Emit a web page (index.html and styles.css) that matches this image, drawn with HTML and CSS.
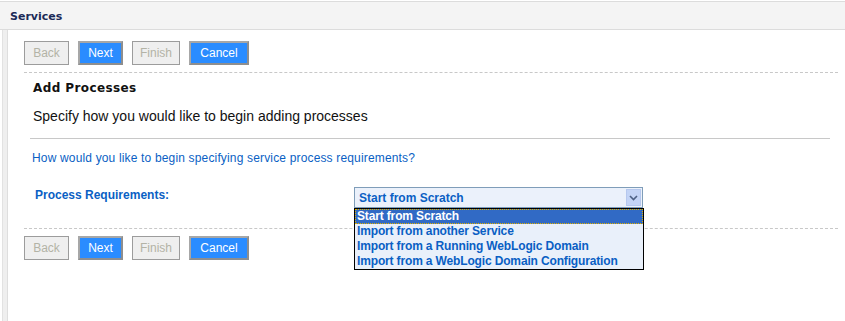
FILE: index.html
```html
<!DOCTYPE html>
<html>
<head>
<meta charset="utf-8">
<link rel="stylesheet" href="styles.css">
</head>
<body>
<div class="header">Services</div>
<div class="main">
  <div class="rail"></div>
  <div class="content">
    <div class="btnrow">
      <span class="btn disabled w45">Back</span>
      <span class="btn active w45">Next</span>
      <span class="btn disabled w48">Finish</span>
      <span class="btn active w60">Cancel</span>
    </div>
    <div class="dash"></div>
    <div class="section">
      <div class="title">Add Processes</div>
      <div class="desc">Specify how you would like to begin adding processes</div>
    </div>
    <div class="rule"></div>
    <div class="question">How would you like to begin specifying service process requirements?</div>
    <div class="field">
      <div class="label">Process Requirements:</div>
      <div class="selectwrap">
        <div class="select">
          <span class="seltext">Start from Scratch</span>
          <span class="arrow"><svg width="9" height="6" viewBox="0 0 9 6"><path d="M1 1 L4.5 4.5 L8 1" fill="none" stroke="#4d6185" stroke-width="1.6"/></svg></span>
        </div>
        <ul class="list">
          <li class="sel">Start from Scratch</li>
          <li>Import from another Service</li>
          <li>Import from a Running WebLogic Domain</li>
          <li>Import from a WebLogic Domain Configuration</li>
        </ul>
      </div>
    </div>
    <div class="dash dash2"></div>
    <div class="btnrow btnrow2">
      <span class="btn disabled w45">Back</span>
      <span class="btn active w45">Next</span>
      <span class="btn disabled w48">Finish</span>
      <span class="btn active w60">Cancel</span>
    </div>
  </div>
</div>
</body>
</html>
```
FILE: styles.css
```css
html, body {
  margin: 0;
  padding: 0;
  background: #ffffff;
  font-family: "Liberation Sans", Arial, sans-serif;
}
.header {
  margin-top: 1px;
  height: 27px;
  line-height: 29px;
  border-top: 1px solid #dcdcdc;
  border-bottom: 1px solid #dcdcdc;
  background: #f4f4f4;
  padding-left: 10px;
  font-family: "DejaVu Sans", sans-serif;
  font-weight: bold;
  font-size: 11px;
  color: #1b2a57;
}
.main {
  display: flex;
  height: 291px;
}
.rail {
  width: 4px;
  margin-left: 2px;
  background: #efefef;
  border-left: 1px solid #e2e2e2;
  border-right: 1px solid #dedede;
}
.content {
  flex: 1;
  padding-left: 16px;
  padding-right: 7px;
}
.btnrow {
  display: flex;
  gap: 9px;
  margin-top: 11px;
  height: 24px;
}
.btn {
  box-sizing: border-box;
  height: 24px;
  display: flex;
  align-items: center;
  justify-content: center;
  font-size: 12px;
  font-family: "Liberation Sans", Arial, sans-serif;
}
.w45 { width: 45px; }
.w48 { width: 48px; }
.w60 { width: 60px; }
.btn.disabled {
  border: 1px solid #9c9c9c;
  background: #efefef;
  color: #b3b3a6;
}
.btn.active {
  border: 2px solid #a7a7a7;
  border-right-color: #8e8e8e;
  border-bottom-color: #8e8e8e;
  background: #2a8cff;
  color: #ffffff;
}
.dash {
  margin-top: 7px;
  border-top: 1px dashed #c8c8c8;
}
.section {
  padding-left: 9px;
}
.title {
  margin-top: 7px;
  font-family: "DejaVu Sans", sans-serif;
  font-weight: bold;
  font-size: 12px;
  letter-spacing: 0.4px;
  color: #111111;
  line-height: 16px;
}
.desc {
  margin-top: 12px;
  font-size: 14px;
  line-height: 16px;
  color: #111111;
}
.rule {
  margin: 14px 8px 0 6px;
  border-top: 1px solid #c8c8c8;
}
.question {
  margin-top: 12px;
  padding-left: 8px;
  font-size: 12px;
  letter-spacing: 0.16px;
  line-height: 14px;
  color: #0a5fc4;
}
.field {
  display: flex;
  margin-top: 23px;
  height: 34px;
}
.label {
  width: 319px;
  padding-left: 11px;
  padding-top: 0;
  font-weight: bold;
  font-size: 12px;
  line-height: 14px;
  color: #0a5fc4;
}
.selectwrap {
  position: relative;
  width: 289px;
  margin-top: -1px;
}
.select {
  box-sizing: border-box;
  height: 21px;
  border: 1px solid #7f9db9;
  background: #ebf1fb;
  display: flex;
  align-items: center;
  justify-content: space-between;
  padding: 0 1px 0 4px;
}
.seltext {
  font-weight: bold;
  font-size: 12px;
  color: #0a5fc4;
}
.arrow {
  box-sizing: border-box;
  width: 15px;
  height: 17px;
  background: #c3d4f6;
  border: 1px solid #b6c8ee;
  display: flex;
  align-items: center;
  justify-content: center;
}
.list {
  position: absolute;
  left: 0;
  top: 21px;
  box-sizing: border-box;
  width: 290px;
  margin: 0;
  padding: 0;
  list-style: none;
  border: 1px solid #000000;
  background: #e9f0fa;
}
.list li {
  height: 15px;
  line-height: 15px;
  padding-left: 2px;
  font-weight: bold;
  font-size: 12px;
  letter-spacing: -0.15px;
  color: #0a5fc4;
}
.list li.sel {
  background: #316ac5;
  color: #ffffff;
  outline: 1px dotted #e0b000;
  outline-offset: -1px;
}
.dash2 {
  margin-top: 6px;
}
.btnrow2 {
  margin-top: 7px;
}
```
